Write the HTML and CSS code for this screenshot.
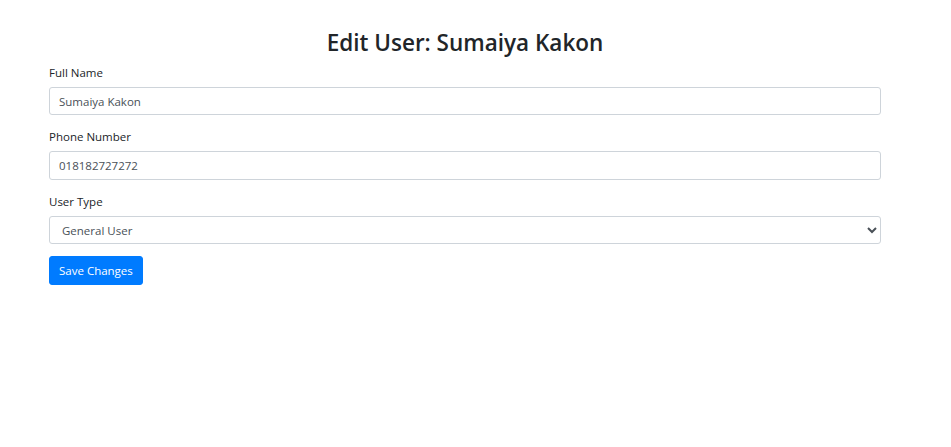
FILE: index.html
```html
<!DOCTYPE html>
<html lang="en">
<head>
<meta charset="utf-8">
<title>Edit User</title>
<link rel="stylesheet" href="styles.css">
</head>
<body>
<div class="container">
  <h2 class="title">Edit User: Sumaiya Kakon</h2>
  <form class="form">
    <div class="group">
      <label class="label" for="name">Full Name</label>
      <input class="control" id="name" type="text" value="Sumaiya Kakon">
    </div>
    <div class="group">
      <label class="label" for="phone">Phone Number</label>
      <input class="control" id="phone" type="text" value="018182727272">
    </div>
    <div class="group">
      <label class="label" for="type">User Type</label>
      <select class="control select" id="type">
        <option selected>General User</option>
        <option>Admin</option>
      </select>
    </div>
    <button type="button" class="btn">Save Changes</button>
  </form>
</div>
</body>
</html>
```
FILE: styles.css
```css
* { box-sizing: border-box; }
html, body { margin: 0; padding: 0; background: #fff; }
body {
  font-family: "Open Sans", "Noto Sans", sans-serif;
  font-size: 12px;
  line-height: 1.5;
  color: #212529;
}
.container {
  width: 832px;
  margin: 0 0 0 49px;
  padding-top: 29px;
}
.title {
  margin: 0 0 5px 0;
  font-size: 22.5px;
  font-weight: 600;
  line-height: 28.8px;
  text-align: center;
  color: #212529;
}
.group { margin-bottom: 12px; display: flex; flex-direction: column; }
.label {
  display: block;
  margin-bottom: 5px;
  padding-top: 1px;
  font-size: 11.5px;
  line-height: 18px;
}
.control {
  display: block;
  width: 100%;
  height: 28.5px;
  padding: 4.5px 9px;
  font-family: inherit;
  font-size: 11.5px;
  line-height: 18px;
  color: #495057;
  background: #fff;
  border: 1px solid #ced4da;
  border-radius: 3px;
  outline: none;
}
.select { padding-left: 8px; }
.btn {
  display: inline-block;
  height: 28.5px;
  padding: 4.5px 9px;
  font-family: inherit;
  font-size: 11.5px;
  line-height: 18px;
  color: #fff;
  background: #007bff;
  border: 1px solid #007bff;
  border-radius: 3px;
}
```
